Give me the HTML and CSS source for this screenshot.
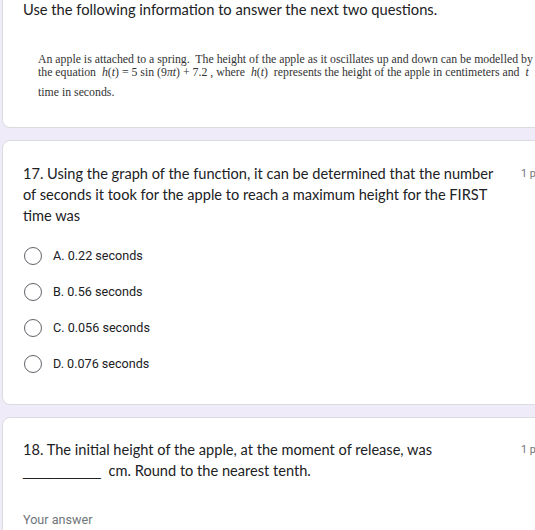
FILE: index.html
```html
<!DOCTYPE html>
<html>
<head>
<meta charset="utf-8">
<link rel="stylesheet" href="styles.css">
</head>
<body>
<div class="page">
  <div class="card card-first">
    <div class="info-title">Use the following information to answer the next two questions.</div>
    <div class="info-image">
      <div class="img-line l1">An apple is attached to a spring.&nbsp; The height of the apple as it oscillates up and down can be modelled by</div>
      <div class="img-line l2">the equation&nbsp; <i>h</i>(<i>t</i>) = 5 sin (9<i>πt</i>) + 7.2 , where&nbsp; <i>h</i>(<i>t</i>)&nbsp; represents the height of the apple in centimeters and&nbsp; <i>t</i>&nbsp; is</div>
      <div class="img-line l3">time in seconds.</div>
    </div>
  </div>

  <div class="card">
    <div class="q-head">
      <div class="q-title">17. Using the graph of the function, it can be determined that the number of seconds it took for the apple to reach a maximum height for the FIRST time was</div>
      <div class="q-points">1 point</div>
    </div>
    <div class="options">
      <div class="option"><span class="radio"></span><span class="opt-label">A. 0.22 seconds</span></div>
      <div class="option"><span class="radio"></span><span class="opt-label">B. 0.56 seconds</span></div>
      <div class="option"><span class="radio"></span><span class="opt-label">C. 0.056 seconds</span></div>
      <div class="option"><span class="radio"></span><span class="opt-label">D. 0.076 seconds</span></div>
    </div>
  </div>

  <div class="card card-last">
    <div class="q-head">
      <div class="q-title">18. The initial height of the apple, at the moment of release, was <span class="blank">__________</span> cm. Round to the nearest tenth.</div>
      <div class="q-points">1 point</div>
    </div>
    <div class="answer">Your answer</div>
  </div>
</div>
</body>
</html>
```
FILE: styles.css
```css
html, body {
  margin: 0;
  padding: 0;
}
body {
  background: #f0ebf8;
  overflow: hidden;
  width: 535px;
  height: 530px;
  font-family: Lato, Roboto, "Liberation Sans", sans-serif;
  color: #202124;
}
.page {
  width: 600px;
  padding-left: 2px;
  display: flex;
  flex-direction: column;
  gap: 12px;
}
.card {
  background: #fff;
  border: 1px solid #dadce0;
  border-radius: 8px;
  padding: 22px 24px 22px 20px;
}
.card-first {
  border-top: 0;
  border-top-left-radius: 0;
  border-top-right-radius: 0;
  padding-top: 0;
  padding-bottom: 28px;
}
.card-last {
  padding-top: 21px;
}
.info-title {
  font-size: 14.7px;
  line-height: 18px;
}
.info-image {
  margin-top: 35px;
  padding-left: 15px;
  font-family: "Liberation Serif", "Times New Roman", serif;
  font-size: 11.8px;
  color: #333;
}
.img-line {
  white-space: nowrap;
  line-height: 12.5px;
}
.l3 {
  margin-top: 8px;
}
.q-head {
  display: flex;
  align-items: flex-start;
  gap: 22px;
}
.q-title {
  width: 476px;
  flex: none;
  font-size: 14.6px;
  line-height: 21px;
}
.blank {
  font-family: "Liberation Sans", Arial, sans-serif;
  font-size: 14px;
  padding-right: 4px;
}
.q-points {
  font-family: Roboto, "Liberation Sans", sans-serif;
  font-size: 10.8px;
  line-height: 21px;
  color: #70757a;
  white-space: nowrap;
}
.options {
  margin-top: 12px;
  display: flex;
  flex-direction: column;
}
.option {
  display: flex;
  align-items: center;
  height: 36px;
}
.radio {
  box-sizing: border-box;
  width: 18px;
  height: 18px;
  border: 1.8px solid #5f6368;
  border-radius: 50%;
  margin-left: 1px;
  margin-right: 11px;
  flex: none;
}
.opt-label {
  font-family: Roboto, "Liberation Sans", sans-serif;
  font-size: 12.6px;
}
.answer {
  margin-top: 28px;
  font-family: Roboto, "Liberation Sans", sans-serif;
  font-size: 12.6px;
  color: #70757a;
  line-height: 20px;
}
```
